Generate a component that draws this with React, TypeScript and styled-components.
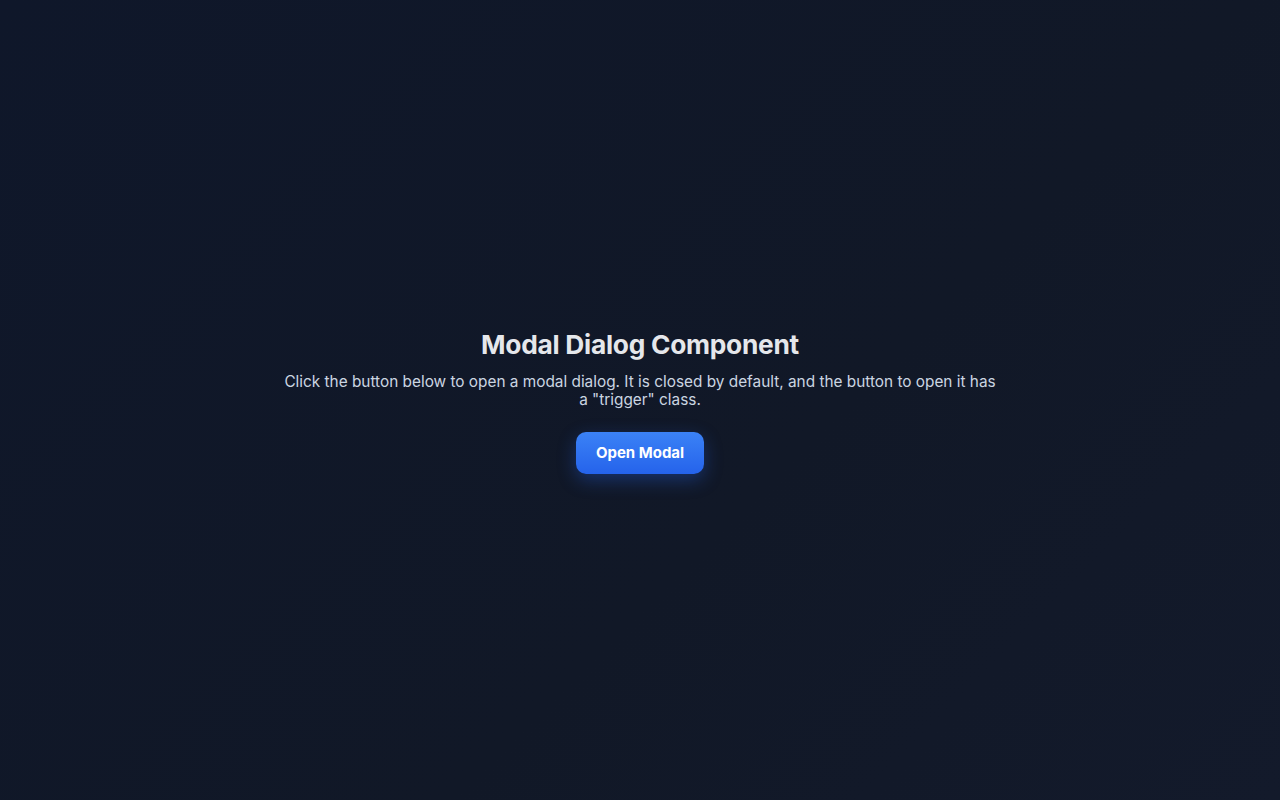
import styled, { createGlobalStyle } from 'styled-components';

const GlobalStyle = createGlobalStyle`
  html, body {
    margin: 0;
    padding: 0;
  }

  body {
    background: #0f172a;
    font-family: Inter, "Noto Sans", "Liberation Sans", sans-serif;
    -webkit-font-smoothing: antialiased;
  }
`;

const Page = styled.main`
  display: flex;
  align-items: center;
  justify-content: center;
  width: 100%;
  min-height: 100vh;
  background: linear-gradient(135deg, #0f172a 0%, #111827 60%, #131a2b 100%);
  box-sizing: border-box;
`;

const Content = styled.section`
  display: flex;
  flex-direction: column;
  align-items: center;
  max-width: 720px;
  padding-top: 3px;
  text-align: center;
`;

const Title = styled.h1`
  margin: 0 0 12px;
  color: #e5e7eb;
  font-size: 26.3px;
  font-weight: 700;
  line-height: 1.2;
  letter-spacing: -0.01em;
`;

const Lead = styled.p`
  margin: 0 0 23px;
  color: #cbd5e1;
  font-size: 15.37px;
  line-height: 18px;
`;

const TriggerButton = styled.button`
  padding: 12px 20px;
  border: none;
  border-radius: 10px;
  background: linear-gradient(180deg, #3b82f6 0%, #2563eb 100%);
  color: #ffffff;
  font-family: inherit;
  font-size: 15px;
  font-weight: 700;
  line-height: 18px;
  cursor: pointer;
  box-shadow: 0 6px 18px rgba(37, 99, 235, 0.35);
`;

const App = () => {
    return (
        <>
            <GlobalStyle/>
            <Page>
                <Content>
                    <Title>Modal Dialog Component</Title>
                    <Lead>
                        Click the button below to open a modal dialog. It is closed by default, and the button to open it has a "trigger" class.
                    </Lead>
                    <TriggerButton className="trigger">Open Modal</TriggerButton>
                </Content>
            </Page>
        </>
    )
};

export default App;
